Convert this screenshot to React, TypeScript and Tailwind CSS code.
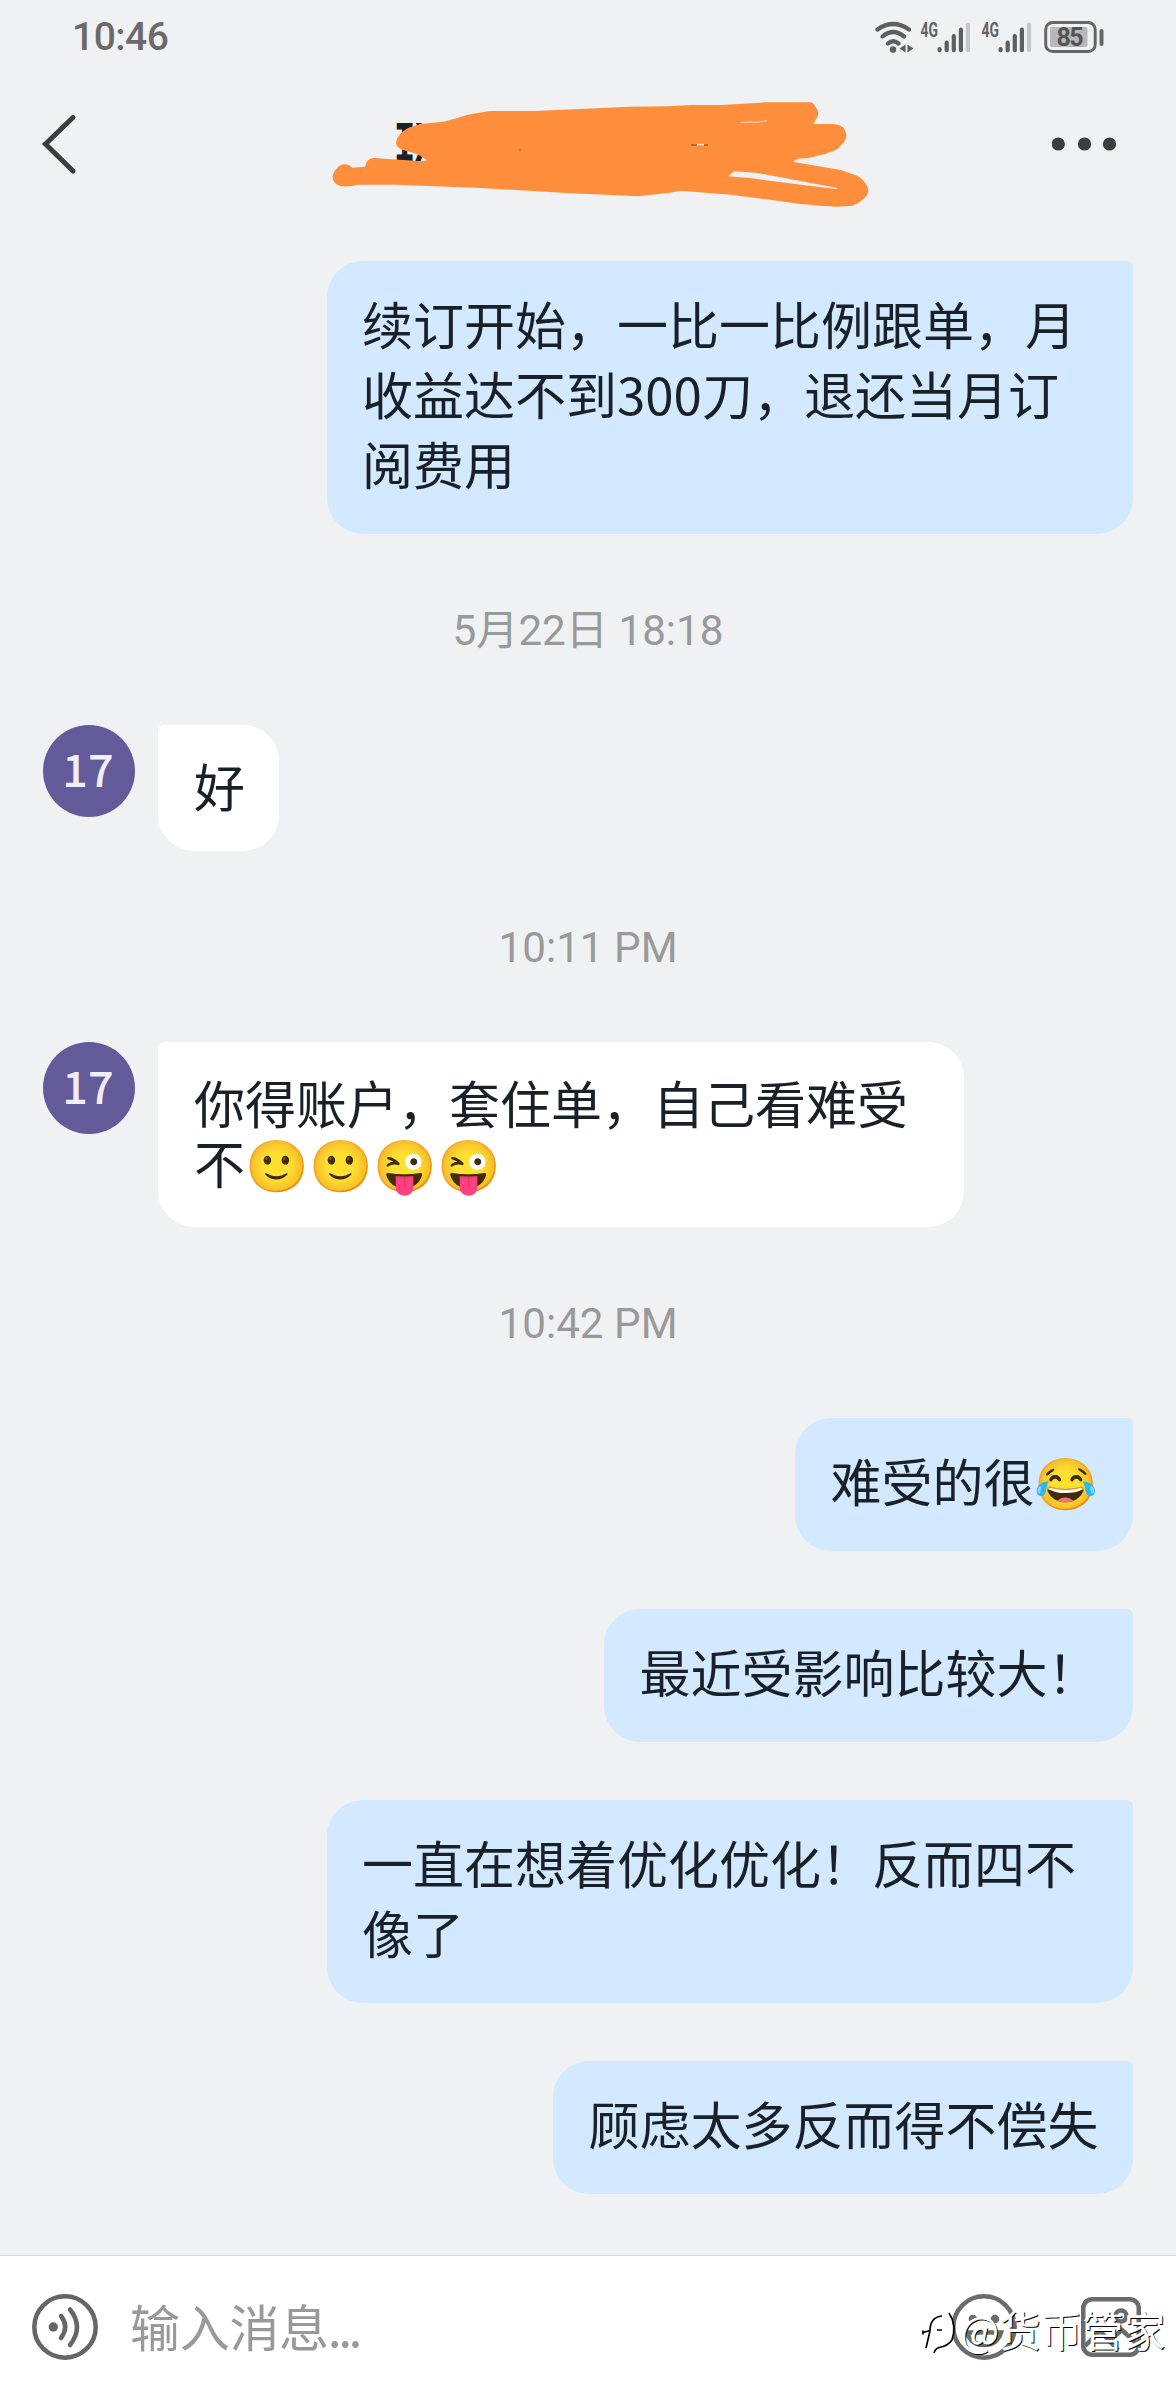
import React from 'react';

type Message =
  | { kind: 'time'; text: string }
  | { kind: 'in'; lines: string[] }
  | { kind: 'out'; lines: string[]; last?: boolean };

const messages: Message[] = [
  { kind: 'out', lines: ['续订开始，一比一比例跟单，月', '收益达不到300刀，退还当月订', '阅费用'], last: true },
  { kind: 'time', text: '5月22日 18:18' },
  { kind: 'in', lines: ['好'] },
  { kind: 'time', text: '10:11 PM' },
  { kind: 'in', lines: ['你得账户，套住单，自己看难受', '不🙂🙂😜😜'] },
  { kind: 'time', text: '10:42 PM' },
  { kind: 'out', lines: ['难受的很😂'] },
  { kind: 'out', lines: ['最近受影响比较大！'] },
  { kind: 'out', lines: ['一直在想着优化优化！反而四不', '像了'] },
  { kind: 'out', lines: ['顾虑太多反而得不偿失'] },
];

const Signal = () => (
  <svg width="51" height="36" viewBox="0 0 51 36" className="mr-[10px]">
    <text x="0.5" y="17.5" textLength="17.5" lengthAdjust="spacingAndGlyphs" className="font-['Roboto'] text-[19.5px] font-bold" fill="#626262">4G</text>
    <g strokeWidth="4.2" strokeLinecap="round" stroke="#5e5e5e">
      <path d="M19.6 30v1.2M26.7 23.5v7.7M33.8 17v14.2M40.9 10.500v20.700" />
      <path d="M48 5.500v25.700" stroke="#c6c6c6" />
    </g>
  </svg>
);

const StatusBar = () => (
  <div className="flex h-[73px] items-center justify-between pl-[72px] pr-[72px]">
    <span className="pt-[2px] font-['Roboto'] text-[39px] leading-[71px] font-medium tracking-[-0.5px] text-[#6a6a6a]">10:46</span>
    <div className="flex items-center">
      <svg width="38" height="36" viewBox="0 0 38 36" fill="none" stroke="#5e5e5e" strokeWidth="4.2" strokeLinecap="round" className="mr-[7px]">
        <path d="M2.500 10.500Q18 -0.500 34 10.500M7.500 17.500Q18 8.500 29 17.500M13 24.500Q18 20 23.500 24.500" />
        <circle cx="18" cy="30.500" r="3.200" fill="#5e5e5e" stroke="none" />
        <path d="M30.500 25.500v8l-6-4zM32.500 25.500v8l6-4z" fill="#5e5e5e" stroke="none" />
      </svg>
      <Signal />
      <Signal />
      <svg width="62" height="36" viewBox="0 0 62 36">
        <rect x="3.700" y="3.500" width="49.500" height="29" rx="7" fill="none" stroke="#666" strokeWidth="3" />
        <rect x="8" y="8" width="37.500" height="20" rx="2" fill="#b8b8b8" />
        <text x="28" y="27" textAnchor="middle" textLength="27" className="font-['Roboto'] text-[25px] font-bold" fill="#555">85</text>
        <path d="M59.500 12v13" stroke="#666" strokeWidth="4" strokeLinecap="round" />
      </svg>
    </div>
  </div>
);

const Header = () => (
  <div className="flex h-[143px] items-start pl-[40px] pr-[58px]">
    <svg width="38" height="143" viewBox="0 0 38 143" fill="none" stroke="#3d3d3d" strokeWidth="5" strokeLinecap="round">
      <path d="M33 44.500L5.500 71L33 98" />
    </svg>
    <svg width="560" height="130" viewBox="0 0 560 130" className="mt-[17px] ml-[242px]">
      <text transform="translate(74 71) scale(.62 1)" className="font-['Liberation_Mono'] text-[57px] font-bold" fill="#1a2027">IX</text>
      <path
        transform="scale(.35714 .33333)"
        fill="#ff8e3c"
        fillRule="evenodd"
        d="M54 228Q66 219 82 226L90 233L126 230Q130 206 150 204L285 214L300 211L272 192L232 180Q212 172 213 156Q216 132 248 113L280 102L345 95L385 84L410 75L475 63L600 63L870 50L975 49L1040 45L1125 45L1250 37L1372 37Q1381 37 1387 50Q1400 66 1392 82L1381 102L1436 102Q1460 104 1468 116Q1480 140 1466 158L1448 178Q1425 191 1368 204L1338 206L1323 215L1458 240L1506 258Q1538 282 1535 306Q1530 330 1490 347L1448 350Q1400 348 1340 341L1250 328L1150 314L1010 302L975 309L890 319L690 309L450 294L215 284L105 284Q90 290 58 289Q37 282 35 262Q37 242 54 228ZM1143 259L1160 244L1220 248L1449 294L1447 297L1380 289L1210 265Z"
      />
      <path d="M421 32.500l10-.5l6 .3l10-1.600" fill="none" stroke="#f6dfce" strokeWidth="1" />
      <path d="M371 55h17" stroke="#6b4a35" strokeWidth="1" />
      <path d="M377 54.700h7" stroke="#f6e6da" strokeWidth="1.600" />
      <circle cx="200" cy="60" r="1" fill="#d9772f" />
    </svg>
    <svg width="66" height="143" viewBox="0 0 66 143" fill="#3d3d3d" className="ml-auto">
      <circle cx="6.300" cy="71" r="6.600" />
      <circle cx="32.500" cy="71" r="6.600" />
      <circle cx="57.500" cy="71" r="6.600" />
    </svg>
  </div>
);

const Incoming = ({ lines }: { lines: string[] }) => (
  <div className="flex items-start pl-[43px]">
    <div className="flex h-[92px] w-[92px] items-center justify-center rounded-full bg-[#625a99] pr-[2px] pb-[7px] text-[45px] leading-none font-medium text-[#f0eefc]">17</div>
    <div
      className={`ml-[23px] rounded-[36px] rounded-tl-[6px] bg-white pt-[30px] pr-[34px] pb-[35.500px] pl-[36px] leading-[60px] ${lines.length > 1 ? 'w-[806px]' : ''}`}
    >
      {lines.map((line) => (
        <p key={line} className="whitespace-nowrap">{line}</p>
      ))}
    </div>
  </div>
);

const Outgoing = ({ lines }: { lines: string[] }) => (
  <div
    className={`max-w-[806px] self-end rounded-[36px] rounded-tr-[6px] bg-[#d2e9ff] pt-[27px] pr-[34.500px] pb-[36px] pl-[35px] leading-[70px] ${lines.length > 1 ? 'w-[806px]' : ''}`}
  >
    {lines.map((line) => (
      <p key={line} className="whitespace-nowrap">{line}</p>
    ))}
  </div>
);

const InputBar = () => (
  <div className="relative flex h-[148px] items-center border-t-[3px] border-[#f1f1f1] bg-white pl-[32px] pr-[35px] pb-[2px]">
    <div className="absolute inset-x-0 top-0 h-px bg-[#dadada]" />
    <svg width="66" height="66" viewBox="0 0 66 66" fill="none" stroke="#666" strokeWidth="4.500" strokeLinecap="round">
      <circle cx="33" cy="33" r="30.700" />
      <circle cx="21.300" cy="33" r="4.700" fill="#666" stroke="none" />
      <path d="M29 22Q37.500 33 29 44M38 15.500Q52 33 38 51" />
    </svg>
    <span className="ml-[32px] pb-[3px] text-[50px] leading-none tracking-[-0.3px] text-[#999]">
      输入消息<span className="ml-[-1px] tracking-[-3.5px]">...</span>
    </span>
    <div className="ml-auto flex items-center gap-[64px]">
      <svg width="66" height="66" viewBox="0 0 66 66" fill="none" stroke="#6b6b6b" strokeWidth="4.500">
        <circle cx="33" cy="33" r="30.700" />
        <circle cx="22" cy="25" r="4.300" fill="#6b6b6b" stroke="none" />
        <circle cx="44" cy="25" r="4.300" fill="#6b6b6b" stroke="none" />
        <path d="M16 38.500h34Q46 51 33 51T16 38.500z" />
      </svg>
      <svg width="60" height="60" viewBox="0 0 60 60" fill="none" stroke="#6b6b6b" strokeWidth="4.500">
        <rect x="2.250" y="2.250" width="55.500" height="55.500" rx="9" />
        <circle cx="40" cy="19" r="5.500" />
        <path d="M4 49L19 34L37 53M28 44L41 33L56 47" />
      </svg>
    </div>
    {/* watermark over the toolbar icons */}
    <div className="absolute top-[44px] left-[919px] flex items-center">
      <svg width="41" height="60" viewBox="0 0 41 60">
        <path d="M8 33L16 21Q24 15 32 20Q38 36 31 46L16 50L10 40Z" fill="#fff" />
        <path d="M4 33.500L11 31.500M4 31.500v4M11 32L7 49M11 32Q11 18 23 17M18 31h5M30 14Q38 26 33 41Q29 47 20 48.500Q16 50 15 54" fill="none" stroke="#000" strokeWidth="1.700" />
      </svg>
      <span className="text-[41.5px] leading-[60px] whitespace-nowrap text-white [text-shadow:1px_1px_0_#000]">@货币管家</span>
    </div>
  </div>
);

export default function App() {
  return (
    <div className="flex h-[2400px] w-[1176px] flex-col overflow-hidden bg-[#eff1f3] font-['Noto_Sans_CJK_SC',sans-serif] text-[51px] text-[#1a2027]">
      <StatusBar />
      <Header />
      <div className="flex flex-1 flex-col pt-[45px] pr-[43px]">
        {messages.map((m, i) => {
          if (m.kind === 'time') {
            return (
              <div key={i} className="mr-[-43px] flex h-[191px] items-center justify-center pt-[4px] font-['Roboto','Noto_Sans_CJK_SC',sans-serif] text-[42.2px] leading-none text-[#999]">
                {m.text}
              </div>
            );
          }
          if (m.kind === 'in') return <Incoming key={i} lines={m.lines} />;
          return (
            <div key={i} className={`flex flex-col ${m.last ? '' : 'pb-[58px]'}`}>
              <Outgoing lines={m.lines} />
            </div>
          );
        })}
      </div>
      <InputBar />
    </div>
  );
}
